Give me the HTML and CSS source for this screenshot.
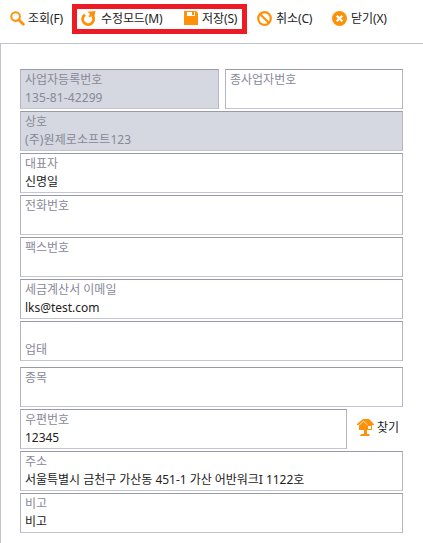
FILE: index.html
```html
<!DOCTYPE html>
<html lang="ko">
<head>
  <meta charset="UTF-8" />
  <meta name="viewport" content="width=device-width, initial-scale=1.0"/>
  <title>사업자 정보</title>
  <link rel="stylesheet" href="styles.css">
</head>
<body>

<div class="toolbar">
  <button type="button" class="tool tool-search">
    <svg class="icon" viewBox="0 0 15 15"><circle cx="5.6" cy="5.6" r="4.3" fill="none" stroke="#ff9108" stroke-width="2"/><path d="M9 9l4.3 4.3" stroke="#ff9108" stroke-width="2.8" stroke-linecap="round"/></svg>
    <span>조회(F)</span>
  </button>
  <div class="highlight">
    <button type="button" class="tool tool-edit">
      <svg class="icon" viewBox="0 0 15 15"><path d="M4 3.6A5.5 5.5 0 1 0 11.2 4.4" fill="none" stroke="#ff9108" stroke-width="2.8"/><path d="M6.5 .8L14.5 0L13.2 6.2L11 4.6L8.5 6.5L7.6 5.6L9 3z" fill="#ff9108"/></svg>
      <span>수정모드(M)</span>
    </button>
    <button type="button" class="tool tool-save">
      <svg class="icon" viewBox="0 0 15 15"><path d="M0 0h12l2 2v12H0z" fill="#ff9108"/><path d="M3 1h8v4H3z" fill="#fff"/><path d="M8 1h2v3H8z" fill="#ff9108"/></svg>
      <span>저장(S)</span>
    </button>
  </div>
  <button type="button" class="tool tool-cancel">
    <svg class="icon" viewBox="0 0 15 15"><circle cx="7.5" cy="7.5" r="6.3" fill="none" stroke="#ff9108" stroke-width="2.2"/><path d="M3.2 3.2l8.6 8.6" stroke="#ff9108" stroke-width="2.2"/></svg>
    <span>취소(C)</span>
  </button>
  <button type="button" class="tool">
    <svg class="icon" viewBox="0 0 15 15"><circle cx="7.5" cy="7.5" r="7.5" fill="#ff9108"/><path d="M4.7 4.7l5.6 5.6M10.3 4.7l-5.6 5.6" stroke="#fff" stroke-width="2.3"/></svg>
    <span>닫기(X)</span>
  </button>
</div>

<div class="container">
  <div class="row">
    <div class="field field-biz readonly">
      <label>사업자등록번호</label>
      <div class="value">135-81-42299</div>
    </div>
    <div class="field">
      <label>종사업자번호</label>
    </div>
  </div>
  <div class="field readonly">
    <label>상호</label>
    <div class="value">(주)원제로소프트123</div>
  </div>
  <div class="field">
    <label>대표자</label>
    <div class="value">신명일</div>
  </div>
  <div class="field">
    <label>전화번호</label>
  </div>
  <div class="field">
    <label>팩스번호</label>
  </div>
  <div class="field">
    <label>세금계산서 이메일</label>
    <div class="value">lks@test.com</div>
  </div>
  <div class="field field-type">
    <label>업태</label>
  </div>
  <div class="field">
    <label>종목</label>
  </div>
  <div class="row">
    <div class="field field-zip">
      <label>우편번호</label>
      <div class="value">12345</div>
    </div>
    <button type="button" class="find">
      <svg class="find-icon" viewBox="0 0 17 17">
        <path d="M0 5L6 0h6l5 5v1h-2v5h-5H2V6H0z" fill="#ff9108"/>
        <path d="M2.2 6L6.5 2.2L10.5 6" fill="none" stroke="#fff" stroke-width=".8"/>
        <path d="M11 7h3v3h-3z" fill="#fff"/>
        <path d="M7 11h3v4h2l1 2H3l1-2h3z" fill="#ff9108"/>
      </svg>
      <span>찾기</span>
    </button>
  </div>
  <div class="field">
    <label>주소</label>
    <div class="value">서울특별시 금천구 가산동 451-1 가산 어반워크I 1122호</div>
  </div>
  <div class="field">
    <label>비고</label>
    <div class="value">비고</div>
  </div>
</div>

</body>
</html>
```
FILE: styles.css
```css
* {
  box-sizing: border-box;
}
body {
  margin: 0;
  background: #fff;
  color: #222;
  font-family: "Noto Sans", "Noto Sans CJK KR", sans-serif;
  font-size: 12px;
  line-height: 18px;
  overflow: hidden;
}
button {
  padding: 0;
  border: none;
  background: none;
  color: inherit;
  font: inherit;
  white-space: nowrap;
  cursor: pointer;
}
.toolbar {
  display: flex;
  height: 43px;
  padding: 4px 0 0 10px;
}
.tool {
  display: flex;
  align-items: center;
  gap: 4px;
  height: 30px;
  letter-spacing: -0.1px;
}
.icon {
  width: 15px;
  height: 15px;
  flex: none;
  margin-bottom: 1px;
}
.tool-search {
  width: 62px;
  gap: 3px;
}
/* red frame around edit and save */
.highlight {
  display: flex;
  align-items: center;
  width: 175px;
  height: 30px;
  padding-left: 4px;
  border: 5px solid #ed1c24;
}
.tool-edit {
  width: 103px;
  gap: 5px;
}
.tool-save {
  gap: 3px;
}
.tool-cancel {
  width: 75px;
  margin-left: 10px;
  flex: none;
}
.container {
  display: flex;
  flex-direction: column;
  gap: 2px;
  height: 500px;
  padding: 25px 20px 0 19px;
  border-top: 1px solid #c3c3ce;
  border-left: 1px solid #c3c3ce;
}
.row {
  display: flex;
  gap: 6px;
}
.field {
  flex: none;
  height: 40px;
  padding: 1px 4px 0;
  border: 1px solid #b4b4c3;
  border-top-color: #9999a8;
  border-bottom-color: #c3c5d0;
  white-space: nowrap;
}
.row .field {
  flex: 1;
}
.row .field-biz {
  flex: none;
  width: 199px;
}
.row .field-zip {
  flex: none;
  width: 327px;
}
.field label {
  display: block;
  color: #888899;
}
.readonly {
  background: #d5d8e0;
}
.value {
  letter-spacing: -0.03px;
}
.readonly .value {
  color: #888899;
  letter-spacing: 0.1px;
}
.field-type {
  margin-bottom: 4px;
  padding-top: 19px;
}
.find {
  display: flex;
  align-items: center;
  gap: 3px;
  padding: 0 0 3px 4px;
}
.find-icon {
  width: 17px;
  height: 17px;
}
```
